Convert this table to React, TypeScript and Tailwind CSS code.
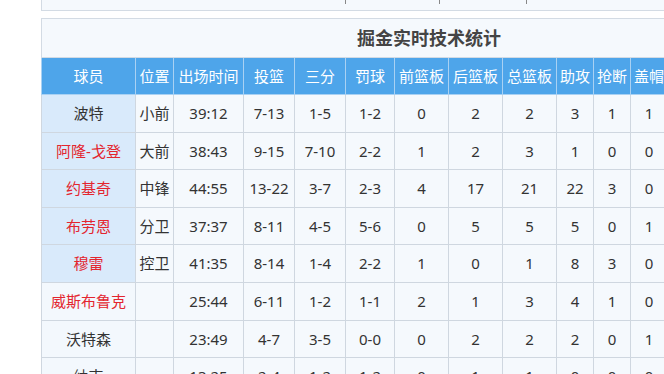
const cols = [94, 38, 70, 51, 51, 49, 54, 54, 54, 37, 37, 37, 50, 50, 49];

const headers = ["球员", "位置", "出场时间", "投篮", "三分", "罚球", "前篮板", "后篮板", "总篮板", "助攻", "抢断", "盖帽", "失误", "犯规", "得分"];

type Row = { name: string; red?: boolean; starter?: boolean; pos: string; stats: string[] };

const rows: Row[] = [
  { name: "波特", starter: true, pos: "小前", stats: ["39:12", "7-13", "1-5", "1-2", "0", "2", "2", "3", "1", "1", "1", "2", "16"] },
  { name: "阿隆-戈登", red: true, starter: true, pos: "大前", stats: ["38:43", "9-15", "7-10", "2-2", "1", "2", "3", "1", "0", "0", "1", "3", "27"] },
  { name: "约基奇", red: true, starter: true, pos: "中锋", stats: ["44:55", "13-22", "3-7", "2-3", "4", "17", "21", "22", "3", "0", "4", "2", "31"] },
  { name: "布劳恩", red: true, starter: true, pos: "分卫", stats: ["37:37", "8-11", "4-5", "5-6", "0", "5", "5", "5", "0", "1", "1", "2", "25"] },
  { name: "穆雷", red: true, starter: true, pos: "控卫", stats: ["41:35", "8-14", "1-4", "2-2", "1", "0", "1", "8", "3", "0", "2", "1", "19"] },
  { name: "威斯布鲁克", red: true, pos: "", stats: ["25:44", "6-11", "1-2", "1-1", "2", "1", "3", "4", "1", "0", "2", "3", "14"] },
  { name: "沃特森", pos: "", stats: ["23:49", "4-7", "3-5", "0-0", "0", "2", "2", "2", "0", "1", "0", "1", "11"] },
  { name: "纳吉", pos: "", stats: ["13:25", "2-4", "1-2", "1-2", "0", "1", "1", "0", "0", "0", "0", "2", "6"] },
];

export default function App() {
  const total = cols.reduce((a, b) => a + b, 0);
  return (
    <div
      className="w-[664px] h-[374px] overflow-hidden bg-white text-[#333]"
      style={{ fontFamily: '"Noto Sans", "Noto Sans CJK SC", sans-serif' }}
    >
      <div className="ml-[41px]">
        <div className="relative h-[11px] border-l border-b border-[#d3dbe4] bg-[#f5f9fd]">
          <span className="absolute left-[303px] top-0 h-[4px] w-px bg-[#888]" />
          <span className="absolute left-[397px] top-0 h-[4px] w-px bg-[#888]" />
          <span className="absolute left-[484px] top-0 h-[4px] w-px bg-[#888]" />
        </div>
        <div className="h-[7px]" />
        <table className="table-fixed border-collapse text-[15px]" style={{ width: total }}>
          <colgroup>
            {cols.map((w, i) => (
              <col key={i} style={{ width: w }} />
            ))}
          </colgroup>
          <thead>
            <tr className="h-[39px] bg-[#f5f9fd]">
              <th colSpan={cols.length} className="border border-[#d3dbe4] text-[18px] font-bold text-[#444]">
                掘金实时技术统计
              </th>
            </tr>
            <tr className="h-[37px] bg-[#4ea5ea] text-white">
              {headers.map((h) => (
                <th key={h} className="border border-[#a9d1f3] px-0 font-normal whitespace-nowrap">
                  {h}
                </th>
              ))}
            </tr>
          </thead>
          <tbody>
            {rows.map((r) => (
              <tr key={r.name} className="h-[37.6px] bg-[#f5f9fd] text-center">
                <td
                  className={`border border-[#cfd7e0] whitespace-nowrap ${r.starter ? "bg-[#d9eafb]" : "bg-[#f3f8fd]"} ${r.red ? "text-[#e3262f]" : "text-[#333]"}`}
                >
                  {r.name}
                </td>
                <td className="border border-[#cfd7e0] whitespace-nowrap">{r.pos}</td>
                {r.stats.map((s, i) => (
                  <td key={i} className="border border-[#cfd7e0] whitespace-nowrap">
                    {s}
                  </td>
                ))}
              </tr>
            ))}
          </tbody>
        </table>
      </div>
    </div>
  );
}
